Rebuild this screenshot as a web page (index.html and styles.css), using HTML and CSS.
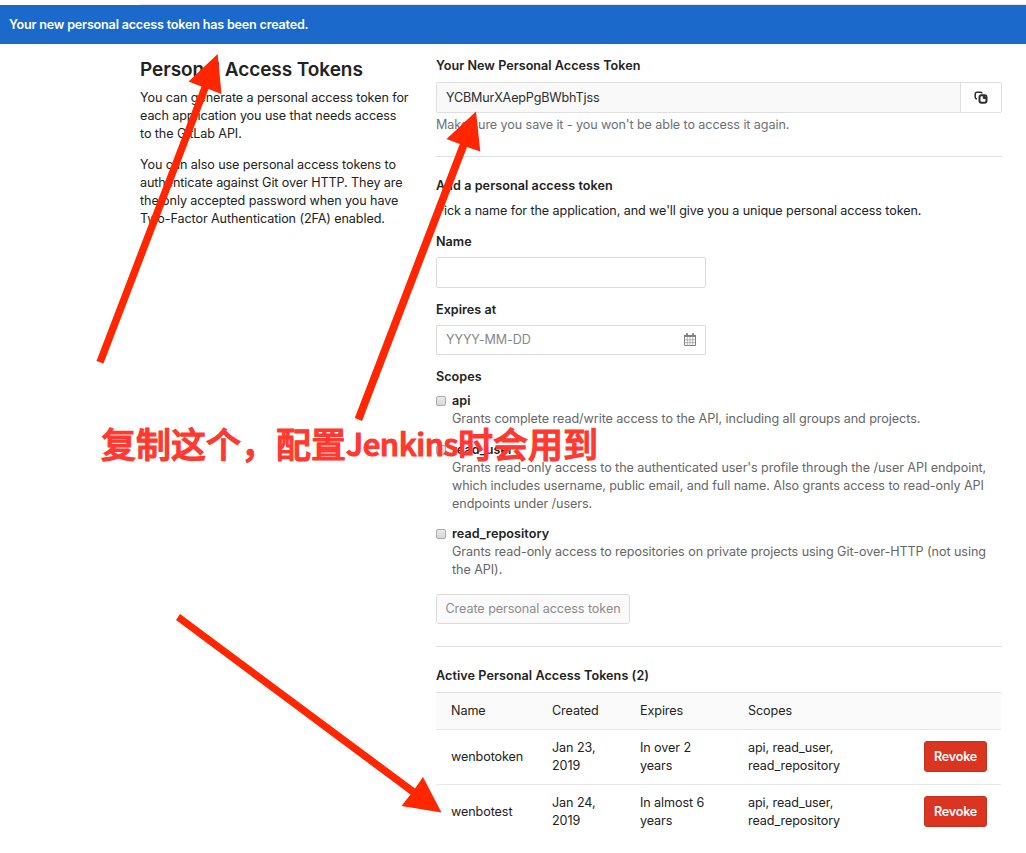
FILE: index.html
```
<!DOCTYPE html>
<html lang="en">
<head>
<meta charset="utf-8">
<title>Personal Access Tokens</title>
<link rel="stylesheet" href="styles.css">
</head>
<body>
<div class="topline"></div>
<div class="flash"><span class="flash-text">Your new personal access token has been created.</span></div>
<main class="page">
  <aside class="intro">
    <h1 class="title">Personal Access Tokens</h1>
    <p>You can generate a personal access token for<br>each application you use that needs access<br>to the GitLab API.</p>
    <p>You can also use personal access tokens to<br>authenticate against Git over HTTP. They are<br>the only accepted password when you have<br>Two-Factor Authentication (2FA) enabled.</p>
  </aside>
  <section class="content">
    <h2 class="label w-new">Your New Personal Access Token</h2>
    <div class="token-group">
      <div class="token-value"><span>YCBMurXAepPgBWbhTjss</span></div>
      <button class="copy" aria-label="Copy">
        <svg width="14" height="13" viewBox="0 0 14 13" fill="none" stroke="#2e2e2e">
          <path d="M8 2.6V2.4Q8 1.2 6.700 1.200H3Q1.200 1.200 1.200 3V6.200Q1.200 7.800 3 8" stroke-width="1.5"/>
          <rect x="5.500" y="4.300" width="7" height="7.500" rx="2" stroke-width="2"/>
          <path d="M9.300 4.300V7.600H12.500L9.300 4.300Z" fill="#2e2e2e" stroke-width="1"/>
        </svg>
      </button>
    </div>
    <p class="help">Make sure you save it - you won't be able to access it again.</p>
    <hr class="rule">
    <h2 class="label add">Add a personal access token</h2>
    <p class="pick">Pick a name for the application, and we'll give you a unique personal access token.</p>
    <div class="label field-label">Name</div>
    <div class="input name-input"></div>
    <div class="label field-label">Expires at</div>
    <div class="input date-input"><span>YYYY-MM-DD</span>
      <svg width="12" height="13" viewBox="0 0 12 13" fill="none" stroke="#808080">
        <path d="M.5 2.500H11.500V12.500H.5Z"/>
        <path d="M0 3H12" stroke-width="2"/>
        <path d="M3 .3V3.500M9 .3V3.500" stroke-width="2"/>
        <path d="M3.300 4V12M6 4V12M8.700 4V12M1 6.800H11M1 9.600H11" stroke="#a2a2a2" stroke-width=".8"/>
      </svg>
    </div>
    <div class="label field-label">Scopes</div>
    <div class="scope first"><i class="check"></i><b>api</b><p>Grants complete read/write access to the API, including all groups and projects.</p></div>
    <div class="scope"><i class="check"></i><b>read_user</b><p>Grants read-only access to the authenticated user's profile through the /user API endpoint,<br>which includes username, public email, and full name. Also grants access to read-only API<br>endpoints under /users.</p></div>
    <div class="scope last"><i class="check"></i><b>read_repository</b><p>Grants read-only access to repositories on private projects using Git-over-HTTP (not using<br>the API).</p></div>
    <button class="create">Create personal access token</button>
    <hr class="rule">
    <h2 class="label add">Active Personal Access Tokens (2)</h2>
    <div class="table">
      <div class="row head"><span>Name</span><span>Created</span><span>Expires</span><span>Scopes</span><span></span></div>
      <div class="row"><span>wenbotoken</span><span>Jan 23,<br>2019</span><span>In over 2<br>years</span><span>api, read_user,<br>read_repository</span><button class="revoke">Revoke</button></div>
      <div class="row"><span>wenbotest</span><span>Jan 24,<br>2019</span><span>In almost 6<br>years</span><span>api, read_user,<br>read_repository</span><button class="revoke">Revoke</button></div>
    </div>
  </section>
</main>
<svg class="arrows" width="1026" height="853" viewBox="0 0 1026 853">
  <g fill="#ff2600">
    <path d="M217.700 54L188.500 81.500L201.500 86.500L96.500 361L103.500 363.500L208.500 89L221.500 94Z"/>
    <path d="M476 111.500L446.500 139L459.800 144L354.800 418L362 421L467 147L480.300 151.500Z"/>
    <path d="M441.500 812.500L423 777L415 788.500L180 614L176 620L410.500 794.500L401.500 806Z"/>
  </g>
</svg>
<div class="note" lang="zh"><span>复制这个，配置</span><span class="latin">Jenkins</span><span>时会用到</span></div>
</body>
</html>
```
FILE: styles.css
```
* { box-sizing: border-box; }
body { margin: 0; width: 1026px; height: 853px; overflow: hidden; position: relative; background: #fff; color: #2e2e2e; font: 12.6px/18px Inter, "Liberation Sans", sans-serif; letter-spacing: -.09px; }
h1, h2, p { margin: 0; }
button { font: inherit; letter-spacing: inherit; margin: 0; padding: 0; }
.topline { height: 1px; margin: 4px 0 0 140px; background: #e5e5e5; }
.flash { height: 39px; padding: 11px 9px; background: #1b69cb; color: #fff; font-weight: 600; letter-spacing: -.2px; }
.page { display: grid; grid-template-columns: 296px 565px; padding-left: 140px; white-space: nowrap; }
.intro { padding-top: 14px; color: #222; }
.title { font-size: 19px; line-height: 24px; font-weight: 600; letter-spacing: -.06px; margin-bottom: 7px; }
.intro p { margin-bottom: 13px; }
.content { padding-top: 13px; }
.label { font-size: 12.6px; line-height: 18px; font-weight: 600; color: #222; letter-spacing: .03px; }
.token-group { display: flex; height: 31px; margin-top: 7px; border: 1px solid #dfdfdf; border-radius: 2px; margin-right: -1px; }
.token-value { flex: 1; background: #f9f9f9; padding: 6px 9px; letter-spacing: -.16px; }
.copy { width: 41px; display: flex; align-items: center; justify-content: center; border: 0; border-left: 1px solid #dfdfdf; background: #fff; }
.help { margin-top: 3px; color: #6b7077; }
.rule { border: 0; height: 1px; margin: 22px -1px 0 0; background: #dfdfdf; }
.add { margin-top: 20px; letter-spacing: .07px; }
.pick { margin-top: 7px; color: #222; }
.field-label { margin-top: 13px; }
.input { width: 270px; height: 31px; margin-top: 6px; border: 1px solid #dcdcdc; border-radius: 2px; background: #fff; }
.date-input { height: 30px; display: flex; align-items: center; justify-content: space-between; padding: 0 9px; color: #888; }
.date-input svg { margin-top: -1px; }
.scope { display: grid; grid-template-columns: 16px 1fr; margin-top: 13px; }
.scope.first { margin-top: 6px; }
.scope.last { margin-top: 12px; }
.scope b { font-weight: 600; color: #222; letter-spacing: .05px; }
.scope p { grid-column: 2; color: #666; letter-spacing: -.065px; }
.check { width: 10px; height: 10px; margin-top: 4px; border: 1px solid #aaa; border-radius: 2px; background: linear-gradient(#e9e9e9, #d8d8d8); }
.create { display: block; width: 194px; height: 30px; margin-top: 15px; border: 1px solid #dcdcdc; border-radius: 3px; background: #fafafa; color: #8c8c8c; letter-spacing: -.06px; }
.table { margin-top: 7px; border-top: 1px solid #dfdfdf; color: #222; }
.row { display: grid; grid-template-columns: 101px 88px 108px 176px 63px; align-items: center; height: 54px; padding-left: 15px; }
.row + .row + .row { border-top: 1px solid #e8e8e8; height: 55px; }
.row.head { height: 37px; background: #fafafa; border-bottom: 1px solid #e8e8e8; }
.revoke { height: 31px; margin-bottom: 1px; border: 1px solid #c0311e; border-radius: 3px; background: #db3421; color: #fff; font-weight: 600; letter-spacing: -.25px; }
.arrows { position: absolute; left: 0; top: 0; }
.note { position: absolute; left: 101px; top: 418px; display: flex; align-items: center; height: 50px; white-space: nowrap; color: #ff3830; font: 500 35px/50px "Noto Sans CJK SC", sans-serif; letter-spacing: 0; -webkit-text-stroke: 1.2px #ff3830; }
.latin { font-size: 31px; letter-spacing: -.4px; }
```
